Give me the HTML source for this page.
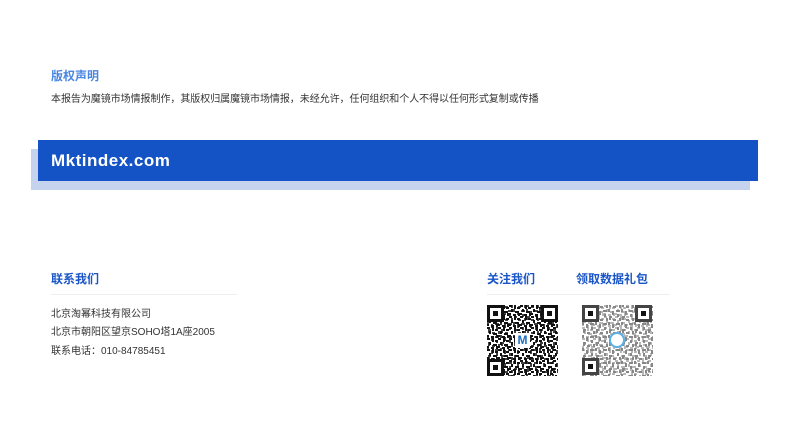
<!DOCTYPE html>
<html><head><meta charset="utf-8"><style>
*{margin:0;padding:0;box-sizing:border-box}
body{width:793px;height:446px;background:#fff;position:relative;overflow:hidden;font-family:"Liberation Sans","Noto Sans CJK SC",sans-serif;color:#333}
.a{position:absolute;white-space:nowrap}
.h{color:#1a55c8;font-weight:bold;font-size:12px}
.t{font-size:10px;color:#333}
.f{position:absolute;width:17px;height:17px;border:3px solid #111;background:#fff}
.f::after{content:"";position:absolute;left:3px;top:3px;width:5px;height:5px;background:#111}
</style></head><body>
<svg width="0" height="0" style="position:absolute"><defs>
<pattern id="p" width="11" height="11" patternUnits="userSpaceOnUse">
<rect x="0" y="0" width="3" height="2" fill="#111"/><rect x="5" y="0" width="2" height="4" fill="#111"/>
<rect x="8" y="2" width="3" height="2" fill="#111"/><rect x="2" y="4" width="2" height="3" fill="#111"/>
<rect x="6" y="6" width="4" height="2" fill="#111"/><rect x="0" y="8" width="2" height="2" fill="#111"/>
<rect x="4" y="9" width="3" height="2" fill="#111"/><rect x="9" y="8" width="2" height="3" fill="#111"/>
</pattern>
<pattern id="q" width="13" height="13" patternUnits="userSpaceOnUse" patternTransform="rotate(90)">
<rect x="0" y="0" width="3" height="2" fill="#111"/><rect x="5" y="1" width="2" height="4" fill="#111"/>
<rect x="9" y="2" width="3" height="2" fill="#111"/><rect x="1" y="5" width="2" height="3" fill="#111"/>
<rect x="6" y="7" width="4" height="2" fill="#111"/><rect x="0" y="10" width="2" height="2" fill="#111"/>
<rect x="4" y="11" width="3" height="2" fill="#111"/><rect x="11" y="9" width="2" height="3" fill="#111"/>
</pattern></defs></svg>
<div class="a h" style="left:51px;top:67px;color:#4a86e0">版权声明</div>
<div class="a t" style="left:51px;top:90px;letter-spacing:-0.05px">本报告为魔镜市场情报制作，其版权归属魔镜市场情报，未经允许，任何组织和个人不得以任何形式复制或传播</div>
<div class="a" style="left:31px;top:149px;width:719px;height:41px;background:#c5d3ef"></div>
<div class="a" style="left:38px;top:140px;width:720px;height:41px;background:#1453c6"></div>
<div class="a" style="left:51px;top:151px;color:#fff;font-weight:bold;font-size:17px;letter-spacing:.5px">Mktindex.com</div>
<div class="a h" style="left:51px;top:270px">联系我们</div>
<div class="a" style="left:51px;top:294px;width:186px;height:1px;background:#eee"></div>
<div class="a t" style="left:51px;top:305px">北京淘幂科技有限公司</div>
<div class="a t" style="left:51px;top:323px">北京市朝阳区望京SOHO塔1A座2005</div>
<div class="a t" style="left:51px;top:342px">联系电话：010-84785451</div>
<div class="a h" style="left:487px;top:270px">关注我们</div>
<div class="a h" style="left:576px;top:270px">领取数据礼包</div>
<div class="a" style="left:487px;top:294px;width:183px;height:1px;background:#eee"></div>
<svg class="a" style="left:487px;top:305px" width="71" height="71"><rect width="71" height="71" fill="url(#p)"/><rect width="71" height="71" fill="url(#q)" opacity=".8"/></svg>
<div class="f" style="left:487px;top:305px"></div><div class="f" style="left:541px;top:305px"></div><div class="f" style="left:487px;top:359px"></div>
<div class="a" style="left:515px;top:333px;width:15px;height:15px;background:#fff;color:#1a6fc0;font-weight:bold;font-size:12px;text-align:center;line-height:15px">M</div>
<svg class="a" style="left:582px;top:305px;opacity:.5" width="71" height="71"><rect width="71" height="71" fill="url(#q)"/><rect width="71" height="71" fill="url(#p)" opacity=".6"/></svg>
<div class="f" style="left:582px;top:305px;border-color:#444"></div><div class="f" style="left:635px;top:305px;border-color:#444"></div><div class="f" style="left:582px;top:358px;border-color:#444"></div>
<div class="a" style="left:609px;top:332px;width:16px;height:16px;background:#fff;border-radius:50%;border:2px solid #5ab0e8"></div>
</body></html>
